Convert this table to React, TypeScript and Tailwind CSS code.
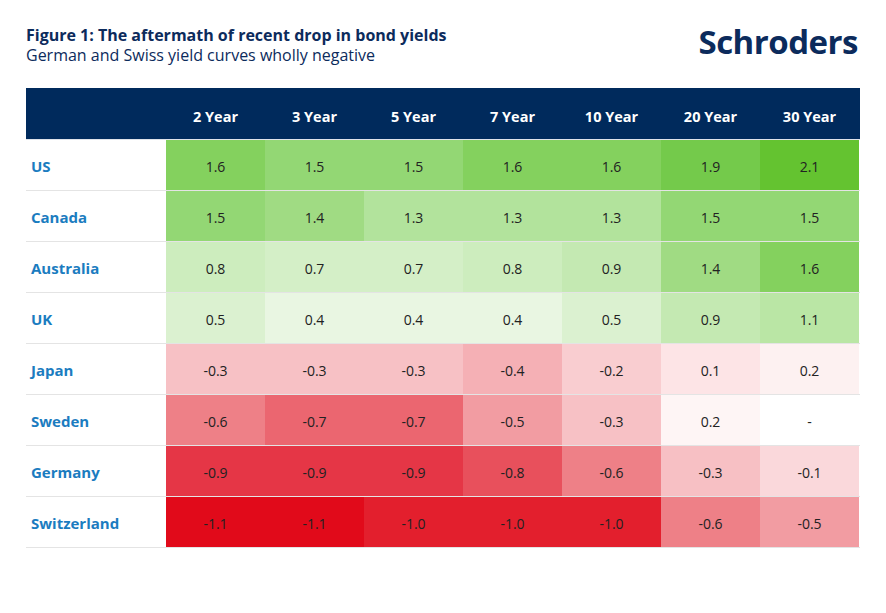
const years = ["2 Year", "3 Year", "5 Year", "7 Year", "10 Year", "20 Year", "30 Year"];

type Cell = { v: string; bg: string };

const rows: { country: string; cells: Cell[] }[] = [
  {
    country: "US",
    cells: [
      { v: "1.6", bg: "#84d15e" },
      { v: "1.5", bg: "#93d774" },
      { v: "1.5", bg: "#93d774" },
      { v: "1.6", bg: "#84d15e" },
      { v: "1.6", bg: "#84d15e" },
      { v: "1.9", bg: "#74ca4b" },
      { v: "2.1", bg: "#64c330" },
    ],
  },
  {
    country: "Canada",
    cells: [
      { v: "1.5", bg: "#93d774" },
      { v: "1.4", bg: "#a0db83" },
      { v: "1.3", bg: "#b2e39c" },
      { v: "1.3", bg: "#b2e39c" },
      { v: "1.3", bg: "#b2e39c" },
      { v: "1.5", bg: "#93d774" },
      { v: "1.5", bg: "#93d774" },
    ],
  },
  {
    country: "Australia",
    cells: [
      { v: "0.8", bg: "#cdedbe" },
      { v: "0.7", bg: "#d4efc7" },
      { v: "0.7", bg: "#d4efc7" },
      { v: "0.8", bg: "#cdedbe" },
      { v: "0.9", bg: "#c4e9b2" },
      { v: "1.4", bg: "#a0db83" },
      { v: "1.6", bg: "#84d15e" },
    ],
  },
  {
    country: "UK",
    cells: [
      { v: "0.5", bg: "#dbf1d0" },
      { v: "0.4", bg: "#e9f6e2" },
      { v: "0.4", bg: "#e9f6e2" },
      { v: "0.4", bg: "#e9f6e2" },
      { v: "0.5", bg: "#dbf1d0" },
      { v: "0.9", bg: "#c4e9b2" },
      { v: "1.1", bg: "#bae6a5" },
    ],
  },
  {
    country: "Japan",
    cells: [
      { v: "-0.3", bg: "#f7c1c5" },
      { v: "-0.3", bg: "#f7c1c5" },
      { v: "-0.3", bg: "#f7c1c5" },
      { v: "-0.4", bg: "#f5b0b5" },
      { v: "-0.2", bg: "#f9cdd0" },
      { v: "0.1", bg: "#fde4e6" },
      { v: "0.2", bg: "#fdf1f1" },
    ],
  },
  {
    country: "Sweden",
    cells: [
      { v: "-0.6", bg: "#ee8087" },
      { v: "-0.7", bg: "#eb6670" },
      { v: "-0.7", bg: "#eb6670" },
      { v: "-0.5", bg: "#f29ca2" },
      { v: "-0.3", bg: "#f7c1c5" },
      { v: "0.2", bg: "#fef5f5" },
      { v: "-", bg: "#ffffff" },
    ],
  },
  {
    country: "Germany",
    cells: [
      { v: "-0.9", bg: "#e53646" },
      { v: "-0.9", bg: "#e53646" },
      { v: "-0.9", bg: "#e53646" },
      { v: "-0.8", bg: "#e8505c" },
      { v: "-0.6", bg: "#ee8087" },
      { v: "-0.3", bg: "#f7c0c4" },
      { v: "-0.1", bg: "#fad8db" },
    ],
  },
  {
    country: "Switzerland",
    cells: [
      { v: "-1.1", bg: "#e10a1a" },
      { v: "-1.1", bg: "#e10a1a" },
      { v: "-1.0", bg: "#e31f2d" },
      { v: "-1.0", bg: "#e31f2d" },
      { v: "-1.0", bg: "#e31f2d" },
      { v: "-0.6", bg: "#ee8087" },
      { v: "-0.5", bg: "#f29ca2" },
    ],
  },
];

export default function App() {
  return (
    <div className="w-[886px] h-[613px] bg-white font-['Open_Sans',sans-serif] pt-[25px] pl-[26px] pr-[26px]">
      {/* Title + logo */}
      <div className="flex justify-between items-start">
        <div className="text-[#0c2b5c] leading-[20px]">
          <div className="text-[16px] font-bold">Figure 1: The aftermath of recent drop in bond yields</div>
          <div className="text-[16px]">German and Swiss yield curves wholly negative</div>
        </div>
        <div className="text-[#0c2b5c] text-[33px] font-bold tracking-[-0.5px] leading-none mr-[2px]">
          Schroders
        </div>
      </div>

      {/* Table */}
      <div className="mt-[23px] w-[834px]">
        <div className="flex h-[52px] bg-[#002a5c] border-b border-[#dfe3ea]">
          <div className="w-[140px]" />
          {years.map((y) => (
            <div key={y} className="w-[99px] flex items-center justify-center pt-[6px] text-white text-[14.5px] font-bold">
              {y}
            </div>
          ))}
        </div>
        {rows.map((r) => (
          <div key={r.country} className="flex h-[51px] border-b border-[#e4e4e4]">
            <div className="w-[140px] flex items-center pl-[5px] pt-[3px] text-[#1b7cc0] text-[15px] font-bold">
              {r.country}
            </div>
            {r.cells.map((c, i) => (
              <div
                key={i}
                className="w-[99px] flex items-center justify-center pt-[3px] text-[#222] text-[14px]"
                style={{ backgroundColor: c.bg }}
              >
                {c.v}
              </div>
            ))}
          </div>
        ))}
      </div>
    </div>
  );
}
